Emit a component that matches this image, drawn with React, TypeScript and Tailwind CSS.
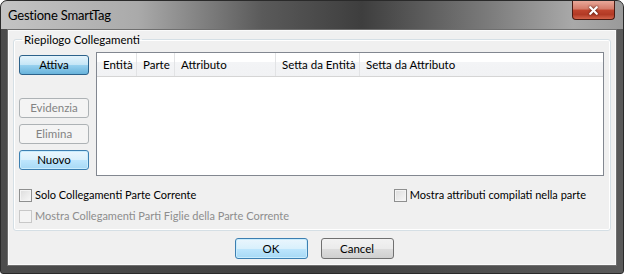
import { X } from "lucide-react";

const font = { fontFamily: '"Segoe UI", Lato, "Liberation Sans", sans-serif' };

function WinButton({ label, kind = "normal", className = "" }: { label: string; kind?: "normal" | "pressed" | "focus" | "disabled"; className?: string }) {
  const styles = {
    normal: "border-[#707070] bg-[linear-gradient(#f2f2f2_0%,#ebebeb_50%,#dddddd_51%,#cfcfcf_100%)] text-black",
    pressed: "border-[#2c628b] bg-[linear-gradient(#e5f4fc_0%,#c4e5f6_50%,#98d1ef_51%,#68b3db_100%)] text-black",
    focus: "border-[#3c7fb1] bg-[linear-gradient(#eaf6fd_0%,#d9f0fc_50%,#bee6fd_51%,#a7d9f5_100%)] text-black shadow-[inset_0_0_0_1px_#c9ecfd]",
    disabled: "border-[#adb2b5] bg-[#f4f4f4] text-[#838383]",
  }[kind];
  return (
    <div className={`h-[20px] rounded-[3px] border flex items-center justify-center text-[11.5px] leading-none ${styles} ${className}`}>
      {label}
    </div>
  );
}

function CheckBox({ label, disabled = false }: { label: string; disabled?: boolean }) {
  return (
    <div className={`flex items-center gap-[3px] text-[11px] leading-[14px] ${disabled ? "text-[#8d8d8d]" : "text-black"}`}>
      <div className={`size-[13px] border ${disabled ? "border-[#c8c8c8] bg-[#f4f4f4]" : "border-[#8e8f8f] bg-[linear-gradient(135deg,#dcdcdc,#f8f8f8)] shadow-[inset_0_0_0_1px_#f4f4f4]"}`} />
      <span>{label}</span>
    </div>
  );
}

export default function App() {
  const cols = [
    { name: "Entità", w: "w-[40px]" },
    { name: "Parte", w: "w-[38px]" },
    { name: "Attributo", w: "w-[101px]" },
    { name: "Setta da Entità", w: "w-[84px]" },
    { name: "Setta da Attributo", w: "flex-1" },
  ];

  return (
    <div style={font} className="w-[624px] h-[274px] rounded-t-[7px] rounded-b-[3px] border border-[#2a2a2a] bg-[linear-gradient(90deg,#4c4c4c,#3f3f3f_50%,#5a5a5a)] flex flex-col overflow-hidden">
      <div className="h-[28px] shrink-0 flex items-start bg-[linear-gradient(90deg,#c4c4c4_0%,#aaaaaa_22%,#5a5a5a_42%,#3e3e3e_58%,#7a7a7a_78%,#a9a9a9_92%,#9a9a9a_100%)]">
        <span className="ml-[7px] mt-[5px] text-[13px] tracking-[-0.2px] leading-[18px] text-black">Gestione SmartTag</span>
        <div className="ml-auto mr-[8px] w-[43px] h-[19px] rounded-b-[4px] border border-t-0 border-[#4a1a12] bg-[linear-gradient(#e9a899_0%,#d47a68_45%,#c0452e_50%,#b23a25_75%,#d2634a_100%)] flex items-center justify-center">
          <X className="size-[13px] text-white drop-shadow-[0_0_1px_#3a1008]" strokeWidth={4} />
        </div>
      </div>

      <div className="mx-[6px] mb-[7px] flex-1 border border-[#6f6f6f] bg-[#f0f0f0] shadow-[inset_0_0_0_1px_#fafafa] flex flex-col">
        <fieldset className="mx-[5px] mt-[2px] border border-[#d5dfe5] rounded-[3px] shadow-[inset_0_0_0_1px_#fff] px-[5px] pb-[7px]">
          <legend className="ml-[3px] px-[2px] text-[11.5px] leading-[15px] text-black">Riepilogo Collegamenti</legend>

          <div className="flex gap-[7px] mt-[5px]">
            <div className="w-[70px] flex flex-col pt-[3px]">
              <WinButton label="Attiva" kind="pressed" />
              <WinButton label="Evidenzia" kind="disabled" className="mt-[23px]" />
              <WinButton label="Elimina" kind="disabled" className="mt-[6px]" />
              <WinButton label="Nuovo" kind="focus" className="mt-[6px]" />
            </div>

            <div className="w-[508px] h-[124px] border border-[#828790] bg-white">
              <div className="h-[24px] flex bg-[linear-gradient(#ffffff_0%,#ffffff_40%,#f3f4f6_41%,#f1f2f4_100%)] border-b border-[#d5d5d5]">
                {cols.map((c) => (
                  <div key={c.name} className={`${c.w} h-full px-[6px] flex items-center whitespace-nowrap text-[11.5px] text-black border-r border-[#e2e3e5] last:border-r-0`}>
                    {c.name}
                  </div>
                ))}
              </div>
            </div>
          </div>

          <div className="mt-[12px] flex justify-between pr-[19px]">
            <CheckBox label="Solo Collegamenti Parte Corrente" />
            <CheckBox label="Mostra attributi compilati nella parte" />
          </div>
          <div className="mt-[7px]">
            <CheckBox label="Mostra Collegamenti Parti Figlie della Parte Corrente" disabled />
          </div>
        </fieldset>

        <div className="flex justify-center gap-[13px] mt-[7px] pl-[4px]">
          <WinButton label="OK" kind="focus" className="w-[73px] h-[21px]" />
          <WinButton label="Cancel" className="w-[73px] h-[21px]" />
        </div>
      </div>
    </div>
  );
}
